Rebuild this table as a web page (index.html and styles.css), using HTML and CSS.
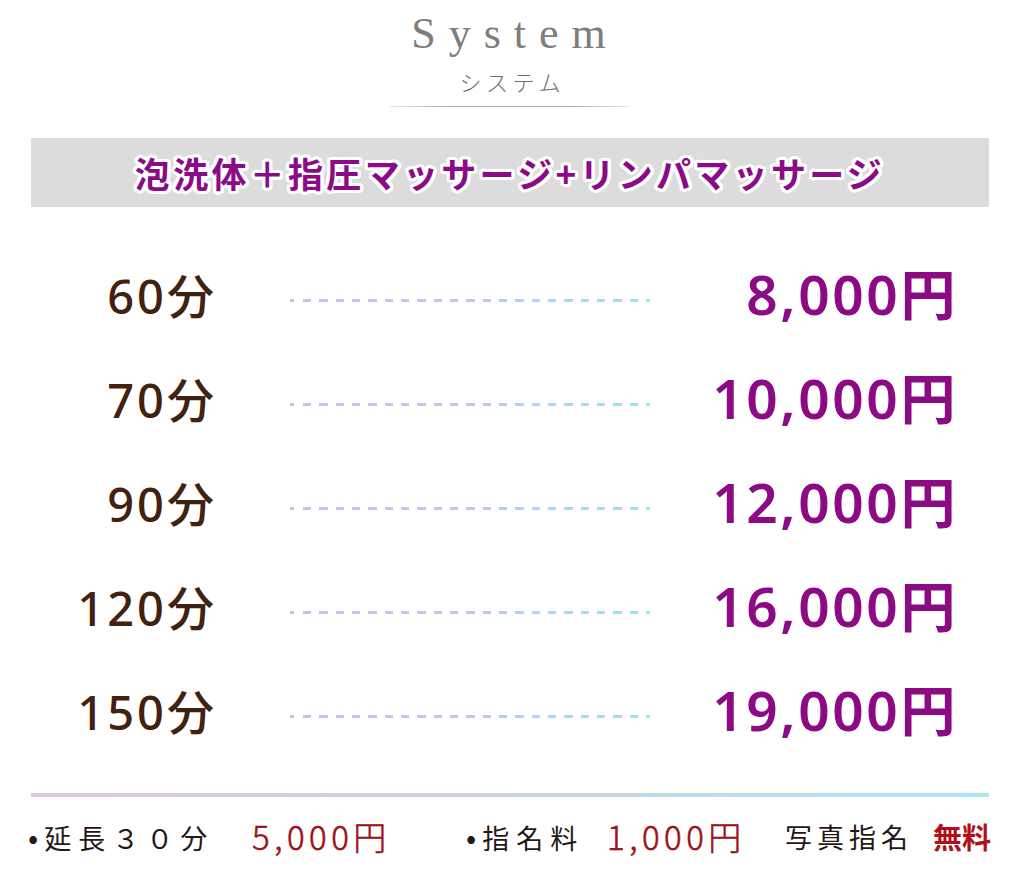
FILE: index.html
```html
<!DOCTYPE html>
<html lang="ja">
<head>
<meta charset="utf-8">
<title>System</title>
<link rel="stylesheet" href="styles.css">
</head>
<body>
<div class="page">
  <header class="head">
    <div class="head-en">System</div>
    <div class="head-ja">システム</div>
    <div class="head-rule"></div>
  </header>

  <div class="banner"><span class="banner-text">泡洗体＋指圧マッサージ+リンパマッサージ</span></div>

  <div class="rows">
    <div class="row"><div class="dur">60分</div><div class="dots"></div><div class="price">8,000円</div></div>
    <div class="row"><div class="dur">70分</div><div class="dots"></div><div class="price">10,000円</div></div>
    <div class="row"><div class="dur">90分</div><div class="dots"></div><div class="price">12,000円</div></div>
    <div class="row"><div class="dur">120分</div><div class="dots"></div><div class="price">16,000円</div></div>
    <div class="row"><div class="dur">150分</div><div class="dots"></div><div class="price">19,000円</div></div>
  </div>

  <div class="foot-rule"></div>

  <div class="foot">
    <div class="foot-label"><span class="bullet">•</span>延長３０分</div>
    <div class="foot-price">5,000円</div>
    <div class="foot-label"><span class="bullet">•</span>指名料</div>
    <div class="foot-price">1,000円</div>
    <div class="foot-label plain">写真指名</div>
    <div class="foot-free">無料</div>
  </div>
</div>
</body>
</html>
```

FILE: styles.css
```css
* { box-sizing: border-box; }
html, body { margin: 0; padding: 0; background: #ffffff; }
body {
  font-family: "Noto Sans CJK JP", "Noto Sans", sans-serif;
}
.page {
  width: 1020px;
  height: 881px;
  overflow: hidden;
}

/* Header */
.head {
  display: flex;
  flex-direction: column;
  align-items: center;
  padding-top: 12px;
}
.head-en {
  font-family: "Liberation Serif", serif;
  font-size: 44px;
  line-height: 44px;
  letter-spacing: 13px;
  padding-left: 10px;
  color: #7d7d7d;
}
.head-ja {
  margin-top: 14px;
  font-size: 22px;
  line-height: 22px;
  letter-spacing: 4.5px;
  padding-left: 4.5px;
  font-weight: 300;
  color: #6e6e6e;
}
.head-rule {
  margin-top: 14px;
  width: 240px;
  height: 1px;
  background: linear-gradient(90deg, rgba(150,150,150,0.2), #a8a8a8 25%, #a8a8a8 75%, rgba(150,150,150,0.2));
}

/* Banner */
.banner {
  margin: 31px 31px 0 31px;
  height: 69px;
  background: #dcdcdc;
  display: flex;
  align-items: center;
  justify-content: center;
}
.banner-text {
  font-size: 35px;
  font-weight: 700;
  letter-spacing: 3.3px;
  color: #8a0b85;
  line-height: 1;
  text-shadow:
    2px 0 0 #fff, -2px 0 0 #fff, 0 2px 0 #fff, 0 -2px 0 #fff,
    2px 2px 0 #fff, -2px -2px 0 #fff, 2px -2px 0 #fff, -2px 2px 0 #fff,
    3px 0 0 #fff, -3px 0 0 #fff, 0 3px 0 #fff, 0 -3px 0 #fff,
    3px 1px 0 #fff, -3px 1px 0 #fff, 3px -1px 0 #fff, -3px -1px 0 #fff,
    1px 3px 0 #fff, -1px 3px 0 #fff, 1px -3px 0 #fff, -1px -3px 0 #fff,
    3px 2px 0 #fff, -3px 2px 0 #fff, 3px -2px 0 #fff, -3px -2px 0 #fff;
}

/* Price rows */
.rows {
  margin-top: 41px;
  display: flex;
  flex-direction: column;
}
.row {
  height: 104px;
  display: grid;
  grid-template-columns: 290px 360px 305px;
  align-items: center;
}
.dur {
  text-align: right;
  padding-right: 73px;
  font-family: "Noto Sans", "Noto Sans CJK JP", sans-serif;
  font-size: 47px;
  line-height: 1;
  font-weight: 500;
  letter-spacing: 3px;
  color: #43210f;
  position: relative;
  top: -4px;
}
.dots {
  height: 3px;
  background:
    repeating-linear-gradient(90deg, #ffffff 0 8px, transparent 8px 16.33px),
    linear-gradient(90deg, #d8bbe6 0%, #c4c6ee 45%, #9fe2f0 100%);
  background-position: 5px 0, 0 0;
}
.price {
  text-align: right;
  margin-right: -3px;
  font-family: "Noto Sans", "Noto Sans CJK JP", sans-serif;
  font-size: 55px;
  line-height: 1;
  font-weight: 600;
  letter-spacing: 2.6px;
  color: #8c0a84;
  position: relative;
  top: -7px;
}

/* Footer */
.foot-rule {
  margin: 25px 31px 0 31px;
  height: 4px;
  background: linear-gradient(90deg, #ddc7e2 0%, #cdd0e6 45%, #a9e9f0 100%);
}
.foot {
  margin-top: 19px;
  padding-left: 28px;
  display: grid;
  grid-template-columns: 224px 214px 141px 178px 148px auto;
  align-items: center;
  height: 40px;
}
.foot-label {
  font-size: 27px;
  line-height: 1;
  letter-spacing: 7px;
  color: #231815;
  white-space: nowrap;
}
.foot-label.plain {
  letter-spacing: 5px;
}
.bullet {
  font-size: 30px;
  letter-spacing: 0;
  margin-right: 6px;
}
.foot-price {
  font-size: 33px;
  line-height: 1;
  font-weight: 300;
  letter-spacing: 4.5px;
  color: #b2121a;
  -webkit-text-stroke: 0.5px #7d0008;
  white-space: nowrap;
}
.foot-free {
  font-size: 29px;
  line-height: 1;
  font-weight: 700;
  color: #b0101a;
  white-space: nowrap;
}
```
